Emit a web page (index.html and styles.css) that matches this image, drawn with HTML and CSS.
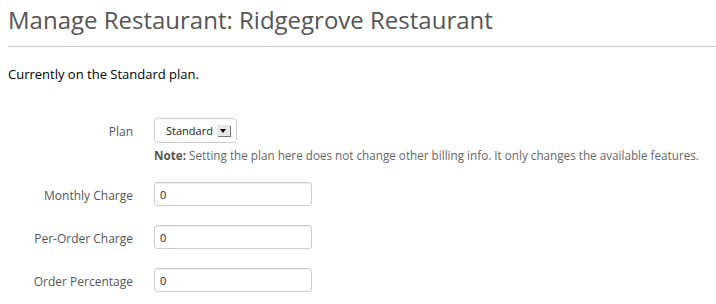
FILE: index.html
```html
<!DOCTYPE html>
<html lang="en">
<head>
    <meta charset="UTF-8">
    <meta name="viewport" content="width=device-width, initial-scale=1.0">
    <title>Manage Restaurant</title>
    <link rel="stylesheet" href="styles.css">
</head>
<body>
    <div class="page">
        <h1 class="page-title">Manage Restaurant: Ridgegrove Restaurant</h1>

        <p class="current-plan">Currently on the Standard plan.</p>

        <form class="form-horizontal">
            <div class="control-group">
                <label class="control-label">Plan</label>
                <div class="controls">
                    <div class="select">
                        <span class="select-value">Standard</span>
                        <span class="select-arrow"></span>
                    </div>
                    <p class="help-block"><strong>Note:</strong> Setting the plan here does not change other billing info. It only changes the available features.</p>
                </div>
            </div>

            <div class="control-group">
                <label class="control-label" for="monthly">Monthly Charge</label>
                <div class="controls">
                    <input type="text" id="monthly" value="0">
                </div>
            </div>

            <div class="control-group">
                <label class="control-label" for="perOrder">Per-Order Charge</label>
                <div class="controls">
                    <input type="text" id="perOrder" value="0">
                </div>
            </div>

            <div class="control-group">
                <label class="control-label" for="percentage">Order Percentage</label>
                <div class="controls">
                    <input type="text" id="percentage" value="0">
                </div>
            </div>
        </form>
    </div>
</body>
</html>
```

FILE: styles.css
```css
body {
    font-family: "Open Sans", Arial, sans-serif;
    margin: 0;
    padding: 0;
    background: #fff;
    color: #000;
}
.page {
    padding-left: 8px;
}
.page-title {
    margin: 0;
    padding: 6px 0 12px;
    font-size: 24px;
    font-weight: 400;
    line-height: 28px;
    color: #555;
    border-bottom: 1px solid #ccc;
}
.current-plan {
    margin: 18px 0 0;
    font-size: 13px;
    line-height: 18px;
}
.form-horizontal {
    margin-top: 35px;
}
.control-group {
    display: flex;
    align-items: flex-start;
    margin-bottom: 19px;
}
.control-label {
    width: 125px;
    flex: none;
    padding-top: 5px;
    margin-right: 21px;
    text-align: right;
    font-size: 12px;
    line-height: 18px;
    color: #555;
}
.controls {
    flex: 1;
}
.select {
    display: flex;
    align-items: center;
    width: 83px;
    height: 25px;
    box-sizing: border-box;
    padding: 0 6px 0 11px;
    border: 1px solid #ccc;
    border-radius: 4px;
    background: #fff;
    font-size: 11px;
    color: #222;
}
.select-value {
    flex: 1;
}
.select-arrow {
    position: relative;
    width: 13px;
    height: 11px;
    background: #e6e6e6;
    box-shadow: 1px 1px 0 #777;
}
.select-arrow::after {
    content: "";
    position: absolute;
    left: 3px;
    top: 4px;
    border-left: 3px solid transparent;
    border-right: 3px solid transparent;
    border-top: 4px solid #000;
}
.help-block {
    margin: 4px 0 0;
    font-size: 11.7px;
    line-height: 16px;
    color: #666;
}
.help-block strong {
    color: #555;
}
input {
    display: block;
    width: 158px;
    height: 24px;
    box-sizing: border-box;
    padding: 2px 5px;
    border: 1px solid #ccc;
    border-radius: 3px;
    box-shadow: inset 0 1px 1px rgba(0, 0, 0, 0.075);
    font-family: "Open Sans", Arial, sans-serif;
    font-size: 11px;
    color: #1a1a40;
}
```
